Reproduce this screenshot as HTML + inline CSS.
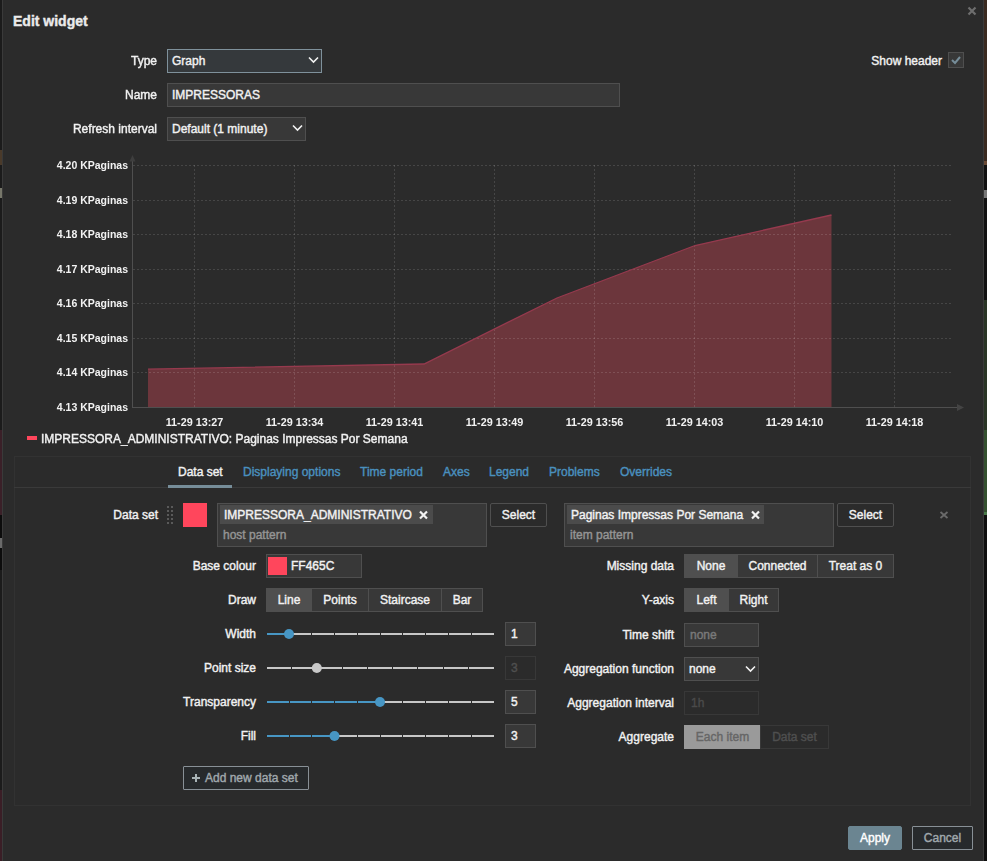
<!DOCTYPE html>
<html><head><meta charset="utf-8">
<style>
*{box-sizing:border-box;margin:0;padding:0}
html,body{width:987px;height:861px;overflow:hidden;background:#161616;font-family:"Liberation Sans",sans-serif;font-size:12px;color:#f2f2f2}
body{-webkit-text-stroke:0.4px currentColor}
.a{position:absolute}
.dlg{position:absolute;left:2px;top:-10px;width:982px;height:880px;background:#2b2b2b;border:1px solid #3a3a3a}
.t{position:absolute;white-space:nowrap;line-height:14px;height:14px}
.lbl{position:absolute;white-space:nowrap;text-align:right;line-height:24px;height:24px}
.inp{position:absolute;height:24px;background:#383838;border:1px solid #4f4f4f;line-height:22px;padding-left:4px;white-space:nowrap}
.btn{position:absolute;height:24px;background:#2b2b2b;border:1px solid #4f4f4f;border-radius:2px;line-height:22px;text-align:center;white-space:nowrap}
.seg{position:absolute;height:24px;background:#383838;border:1px solid #4f4f4f;line-height:22px;text-align:center;white-space:nowrap}
.seg.on{background:#4f4f4f}
.chev{position:absolute;width:7px;height:7px;border-right:1.3px solid #f2f2f2;border-bottom:1.3px solid #f2f2f2;transform:rotate(45deg)}
.tab{position:absolute;top:455px;line-height:14px;color:#4a90bf;white-space:nowrap}
</style></head><body>
<!-- background strips -->
<div class="a" style="left:0;top:0;width:2px;height:861px;background:#1b1b1b"></div>
<div class="a" style="left:0;top:150px;width:2px;height:15px;background:#4a3a2a"></div>
<div class="a" style="left:0;top:188px;width:2px;height:10px;background:#77776a"></div>
<div class="a" style="left:0;top:430px;width:2px;height:85px;background:#3a2028"></div>
<div class="a" style="left:0;top:515px;width:2px;height:55px;background:#0c0c0c"></div>
<div class="a" style="left:0;top:538px;width:2px;height:10px;background:#6a6a6a"></div>
<div class="a" style="left:0;top:790px;width:2px;height:71px;background:#3a1e26"></div>
<div class="a" style="left:984px;top:0;width:3px;height:161px;background:#3a2a20"></div>
<div class="a" style="left:984px;top:161px;width:3px;height:4px;background:#6a4a35"></div>
<div class="a" style="left:984px;top:165px;width:3px;height:135px;background:#111"></div>
<div class="a" style="left:984px;top:190px;width:3px;height:8px;background:#777"></div>
<div class="a" style="left:984px;top:300px;width:3px;height:130px;background:#2a3526"></div>
<div class="a" style="left:984px;top:430px;width:3px;height:82px;background:#34502f"></div>
<div class="a" style="left:984px;top:512px;width:3px;height:3px;background:#4a7a4a"></div>
<div class="a" style="left:984px;top:515px;width:3px;height:346px;background:#0f0f0f"></div>
<div class="dlg"></div>

<!-- header -->
<div class="t" style="left:13px;top:13px;font-size:14px;font-weight:bold;line-height:16px;height:16px;color:#ebebeb">Edit widget</div>
<svg class="a" style="left:966px;top:5px" width="12" height="12" viewBox="0 0 12 12"><path d="M2.5 2.5L9.5 9.5M9.5 2.5L2.5 9.5" stroke="#6e6e6e" stroke-width="2.2"/></svg>

<!-- top form -->
<div class="lbl" style="left:0;width:157px;top:49px">Type</div>
<div class="inp" style="left:167px;top:49px;width:155px;border-color:#7f919b;background:#35393c">Graph</div>
<svg class="a" style="left:308px;top:56px" width="11" height="8" viewBox="0 0 11 8"><path d="M1 1.5L5.5 6L10 1.5" stroke="#f2f2f2" stroke-width="1.6" fill="none"/></svg>
<div class="lbl" style="left:0;width:157px;top:83px">Name</div>
<div class="inp" style="left:167px;top:83px;width:453px">IMPRESSORAS</div>
<div class="lbl" style="left:0;width:157px;top:117px">Refresh interval</div>
<div class="inp" style="left:167px;top:117px;width:139px">Default (1 minute)</div>
<svg class="a" style="left:292px;top:124px" width="11" height="8" viewBox="0 0 11 8"><path d="M1 1.5L5.5 6L10 1.5" stroke="#f2f2f2" stroke-width="1.6" fill="none"/></svg>

<div class="lbl" style="left:800px;width:142px;top:49px">Show header</div>
<div class="a" style="left:948px;top:52px;width:16px;height:16px;background:#383838;border:1px solid #4f4f4f"></div>
<svg class="a" style="left:948px;top:52px" width="16" height="16" viewBox="0 0 16 16"><path d="M4 8L7 11L12 5" fill="none" stroke="#768d99" stroke-width="2"/></svg>

<!-- graph -->
<svg class="a" style="left:0;top:140px;font-family:'Liberation Sans',sans-serif;font-size:10.5px;font-weight:bold" width="987" height="310" viewBox="0 140 987 310" fill="#f2f2f2">
<polygon points="148,369.2 424,364 557,298 695,245.5 831.5,215 831.5,407 148,407" fill="#6c363c" stroke="none"/>
<line x1="133" y1="165.5" x2="952" y2="165.5" stroke="#fff" stroke-dasharray="2,2" stroke-opacity="0.13"/>
<line x1="133" y1="200.5" x2="952" y2="200.5" stroke="#fff" stroke-dasharray="2,2" stroke-opacity="0.13"/>
<line x1="133" y1="234.5" x2="952" y2="234.5" stroke="#fff" stroke-dasharray="2,2" stroke-opacity="0.13"/>
<line x1="133" y1="269.5" x2="952" y2="269.5" stroke="#fff" stroke-dasharray="2,2" stroke-opacity="0.13"/>
<line x1="133" y1="303.5" x2="952" y2="303.5" stroke="#fff" stroke-dasharray="2,2" stroke-opacity="0.13"/>
<line x1="133" y1="338.5" x2="952" y2="338.5" stroke="#fff" stroke-dasharray="2,2" stroke-opacity="0.13"/>
<line x1="133" y1="372.5" x2="952" y2="372.5" stroke="#fff" stroke-dasharray="2,2" stroke-opacity="0.13"/>
<line x1="194.5" y1="165" x2="194.5" y2="407" stroke="#fff" stroke-dasharray="2,2" stroke-opacity="0.13"/>
<line x1="294.5" y1="165" x2="294.5" y2="407" stroke="#fff" stroke-dasharray="2,2" stroke-opacity="0.13"/>
<line x1="394.5" y1="165" x2="394.5" y2="407" stroke="#fff" stroke-dasharray="2,2" stroke-opacity="0.13"/>
<line x1="494.5" y1="165" x2="494.5" y2="407" stroke="#fff" stroke-dasharray="2,2" stroke-opacity="0.13"/>
<line x1="594.5" y1="165" x2="594.5" y2="407" stroke="#fff" stroke-dasharray="2,2" stroke-opacity="0.13"/>
<line x1="694.5" y1="165" x2="694.5" y2="407" stroke="#fff" stroke-dasharray="2,2" stroke-opacity="0.13"/>
<line x1="794.5" y1="165" x2="794.5" y2="407" stroke="#fff" stroke-dasharray="2,2" stroke-opacity="0.13"/>
<line x1="894.5" y1="165" x2="894.5" y2="407" stroke="#fff" stroke-dasharray="2,2" stroke-opacity="0.13"/>
<polyline points="148,369.2 424,364 557,298 695,245.5 831.5,215" fill="none" stroke="#963a4e" stroke-width="1.3"/>
<line x1="132.5" y1="159" x2="132.5" y2="407.5" stroke="#4f4f4f"/>
<line x1="132" y1="407.5" x2="958" y2="407.5" stroke="#4f4f4f"/>
<polygon points="129.5,161.5 132.5,155 135.5,161.5" fill="#3e3e3e"/>
<polygon points="957,404 964,407.5 957,411" fill="#444"/>
<text x="128" y="169" text-anchor="end">4.20 KPaginas</text>
<text x="128" y="204" text-anchor="end">4.19 KPaginas</text>
<text x="128" y="238" text-anchor="end">4.18 KPaginas</text>
<text x="128" y="273" text-anchor="end">4.17 KPaginas</text>
<text x="128" y="307" text-anchor="end">4.16 KPaginas</text>
<text x="128" y="342" text-anchor="end">4.15 KPaginas</text>
<text x="128" y="376" text-anchor="end">4.14 KPaginas</text>
<text x="128" y="411" text-anchor="end">4.13 KPaginas</text>
<text x="194.5" y="426" text-anchor="middle" font-size="10.8">11-29 13:27</text>
<text x="294.5" y="426" text-anchor="middle" font-size="10.8">11-29 13:34</text>
<text x="394.5" y="426" text-anchor="middle" font-size="10.8">11-29 13:41</text>
<text x="494.5" y="426" text-anchor="middle" font-size="10.8">11-29 13:49</text>
<text x="594.5" y="426" text-anchor="middle" font-size="10.8">11-29 13:56</text>
<text x="694.5" y="426" text-anchor="middle" font-size="10.8">11-29 14:03</text>
<text x="794.5" y="426" text-anchor="middle" font-size="10.8">11-29 14:10</text>
<text x="894.5" y="426" text-anchor="middle" font-size="10.8">11-29 14:18</text>
</svg>
<div class="a" style="left:27px;top:436px;width:10px;height:4px;background:#ff465c"></div>
<div class="t" style="left:41px;top:432px">IMPRESSORA_ADMINISTRATIVO: Paginas Impressas Por Semana</div>

<!-- tabs container -->
<div class="a" style="left:14px;top:456px;width:957px;height:350px;border:1px solid #323232"></div>
<div class="a" style="left:14px;top:487px;width:957px;height:1px;background:#3a3a3a"></div>
<div class="tab" style="left:178px;top:465px;color:#f2f2f2">Data set</div>
<div class="a" style="left:168px;top:485px;width:64px;height:3px;background:#768d99"></div>
<div class="tab" style="left:243px;top:465px">Displaying options</div>
<div class="tab" style="left:360px;top:465px">Time period</div>
<div class="tab" style="left:443px;top:465px">Axes</div>
<div class="tab" style="left:489px;top:465px">Legend</div>
<div class="tab" style="left:549px;top:465px">Problems</div>
<div class="tab" style="left:620px;top:465px">Overrides</div>


<!-- data set row -->
<div class="lbl" style="left:60px;width:98px;top:503px">Data set</div>
<svg class="a" style="left:166px;top:505px" width="8" height="20" viewBox="0 0 8 20" fill="#5a5a5a"><rect x="1" y="1" width="2" height="2"/><rect x="5" y="1" width="2" height="2"/><rect x="1" y="5" width="2" height="2"/><rect x="5" y="5" width="2" height="2"/><rect x="1" y="9" width="2" height="2"/><rect x="5" y="9" width="2" height="2"/><rect x="1" y="13" width="2" height="2"/><rect x="5" y="13" width="2" height="2"/><rect x="1" y="17" width="2" height="2"/><rect x="5" y="17" width="2" height="2"/></svg>
<div class="a" style="left:183px;top:503px;width:24px;height:24px;background:#ff465c"></div>

<div class="a" style="left:217px;top:503px;width:270px;height:44px;background:#383838;border:1px solid #4f4f4f"></div>
<div class="a" style="left:220px;top:505px;width:213px;height:19px;background:#4b4b4b"></div>
<div class="t" style="left:224px;top:508px">IMPRESSORA_ADMINISTRATIVO</div>
<svg class="a" style="left:418px;top:510px" width="11" height="10" viewBox="0 0 11 10"><path d="M2 1.5L9 8.5M9 1.5L2 8.5" stroke="#f2f2f2" stroke-width="2.2"/></svg>
<div class="t" style="left:223px;top:528px;color:#959595">host pattern</div>
<div class="btn" style="left:490px;top:503px;width:57px">Select</div>

<div class="a" style="left:564px;top:503px;width:270px;height:44px;background:#383838;border:1px solid #4f4f4f"></div>
<div class="a" style="left:567px;top:505px;width:197px;height:19px;background:#4b4b4b"></div>
<div class="t" style="left:571px;top:508px">Paginas Impressas Por Semana</div>
<svg class="a" style="left:750px;top:510px" width="11" height="10" viewBox="0 0 11 10"><path d="M2 1.5L9 8.5M9 1.5L2 8.5" stroke="#f2f2f2" stroke-width="2.2"/></svg>
<div class="t" style="left:570px;top:528px;color:#959595">item pattern</div>
<div class="btn" style="left:837px;top:503px;width:57px">Select</div>
<svg class="a" style="left:938px;top:510px" width="12" height="10" viewBox="0 0 12 10"><path d="M2.5 2L9.5 8M9.5 2L2.5 8" stroke="#6a6a6a" stroke-width="1.8"/></svg>

<!-- left column -->
<div class="lbl" style="left:160px;width:96px;top:554px">Base colour</div>
<div class="inp" style="left:266px;top:554px;width:96px;padding-left:24px">FF465C</div>
<div class="a" style="left:268px;top:557px;width:19px;height:18px;background:#ff465c"></div>

<div class="lbl" style="left:160px;width:96px;top:588px">Draw</div>
<div class="seg on" style="left:266px;top:588px;width:46px">Line</div>
<div class="seg" style="left:311px;top:588px;width:58px">Points</div>
<div class="seg" style="left:368px;top:588px;width:74px">Staircase</div>
<div class="seg" style="left:441px;top:588px;width:42px">Bar</div>

<div class="lbl" style="left:160px;width:96px;top:622px">Width</div>
<div class="lbl" style="left:160px;width:96px;top:656px">Point size</div>
<div class="lbl" style="left:160px;width:96px;top:690px">Transparency</div>
<div class="lbl" style="left:160px;width:96px;top:724px">Fill</div>
<div class="inp" style="left:505px;top:622px;width:31px;padding-left:5px">1</div>
<div class="inp" style="left:505px;top:656px;width:31px;padding-left:5px;background:#2b2b2b;border-color:#383838;color:#4f4f4f">3</div>
<div class="inp" style="left:505px;top:690px;width:31px;padding-left:5px">5</div>
<div class="inp" style="left:505px;top:724px;width:31px;padding-left:5px">3</div>
<svg class="a" style="left:260px;top:622px" width="240" height="24" viewBox="260 622 240 24"><rect x="267" y="633" width="227" height="2" fill="#c8c8c8"/><rect x="267" y="633" width="22.00" height="2" fill="#4796c4"/><rect x="289" y="633" width="1" height="2" fill="#2b2b2b"/><rect x="311" y="633" width="1" height="2" fill="#2b2b2b"/><rect x="334" y="633" width="1" height="2" fill="#2b2b2b"/><rect x="357" y="633" width="1" height="2" fill="#2b2b2b"/><rect x="380" y="633" width="1" height="2" fill="#2b2b2b"/><rect x="402" y="633" width="1" height="2" fill="#2b2b2b"/><rect x="425" y="633" width="1" height="2" fill="#2b2b2b"/><rect x="448" y="633" width="1" height="2" fill="#2b2b2b"/><rect x="471" y="633" width="1" height="2" fill="#2b2b2b"/><circle cx="289.00" cy="634" r="5" fill="#4796c4"/></svg>
<svg class="a" style="left:260px;top:656px" width="240" height="24" viewBox="260 656 240 24"><rect x="267" y="667" width="227" height="2" fill="#c8c8c8"/><rect x="291" y="667" width="1" height="2" fill="#2b2b2b"/><rect x="316" y="667" width="1" height="2" fill="#2b2b2b"/><rect x="342" y="667" width="1" height="2" fill="#2b2b2b"/><rect x="367" y="667" width="1" height="2" fill="#2b2b2b"/><rect x="392" y="667" width="1" height="2" fill="#2b2b2b"/><rect x="417" y="667" width="1" height="2" fill="#2b2b2b"/><rect x="443" y="667" width="1" height="2" fill="#2b2b2b"/><rect x="468" y="667" width="1" height="2" fill="#2b2b2b"/><circle cx="316.81" cy="668" r="5" fill="#c8c8c8"/></svg>
<svg class="a" style="left:260px;top:690px" width="240" height="24" viewBox="260 690 240 24"><rect x="267" y="701" width="227" height="2" fill="#c8c8c8"/><rect x="267" y="701" width="113.00" height="2" fill="#4796c4"/><rect x="289" y="701" width="1" height="2" fill="#2b2b2b"/><rect x="311" y="701" width="1" height="2" fill="#2b2b2b"/><rect x="334" y="701" width="1" height="2" fill="#2b2b2b"/><rect x="357" y="701" width="1" height="2" fill="#2b2b2b"/><rect x="380" y="701" width="1" height="2" fill="#2b2b2b"/><rect x="402" y="701" width="1" height="2" fill="#2b2b2b"/><rect x="425" y="701" width="1" height="2" fill="#2b2b2b"/><rect x="448" y="701" width="1" height="2" fill="#2b2b2b"/><rect x="471" y="701" width="1" height="2" fill="#2b2b2b"/><circle cx="380.00" cy="702" r="5" fill="#4796c4"/></svg>
<svg class="a" style="left:260px;top:724px" width="240" height="24" viewBox="260 724 240 24"><rect x="267" y="735" width="227" height="2" fill="#c8c8c8"/><rect x="267" y="735" width="67.50" height="2" fill="#4796c4"/><rect x="289" y="735" width="1" height="2" fill="#2b2b2b"/><rect x="311" y="735" width="1" height="2" fill="#2b2b2b"/><rect x="334" y="735" width="1" height="2" fill="#2b2b2b"/><rect x="357" y="735" width="1" height="2" fill="#2b2b2b"/><rect x="380" y="735" width="1" height="2" fill="#2b2b2b"/><rect x="402" y="735" width="1" height="2" fill="#2b2b2b"/><rect x="425" y="735" width="1" height="2" fill="#2b2b2b"/><rect x="448" y="735" width="1" height="2" fill="#2b2b2b"/><rect x="471" y="735" width="1" height="2" fill="#2b2b2b"/><circle cx="334.50" cy="736" r="5" fill="#4796c4"/></svg>

<!-- right column -->
<div class="lbl" style="left:560px;width:114px;top:554px">Missing data</div>
<div class="seg on" style="left:684px;top:554px;width:54px">None</div>
<div class="seg" style="left:737px;top:554px;width:81px">Connected</div>
<div class="seg" style="left:817px;top:554px;width:77px">Treat as 0</div>

<div class="lbl" style="left:560px;width:114px;top:588px">Y-axis</div>
<div class="seg on" style="left:684px;top:588px;width:45px">Left</div>
<div class="seg" style="left:728px;top:588px;width:51px">Right</div>

<div class="lbl" style="left:560px;width:114px;top:623px">Time shift</div>
<div class="inp" style="left:684px;top:623px;width:75px;padding-left:5px;color:#7a7a7a">none</div>
<div class="lbl" style="left:540px;width:134px;top:657px">Aggregation function</div>
<div class="inp" style="left:684px;top:657px;width:75px">none</div>
<svg class="a" style="left:745px;top:665px" width="11" height="8" viewBox="0 0 11 8"><path d="M1 1.5L5.5 6L10 1.5" stroke="#f2f2f2" stroke-width="1.6" fill="none"/></svg>
<div class="lbl" style="left:540px;width:134px;top:691px">Aggregation interval</div>
<div class="inp" style="left:684px;top:691px;width:75px;padding-left:6px;background:#2b2b2b;border-color:#383838;color:#4a4a4a">1h</div>
<div class="lbl" style="left:560px;width:114px;top:725px">Aggregate</div>
<div class="seg" style="left:684px;top:725px;width:77px;background:#9a9a9a;border-color:#9a9a9a;color:#666">Each item</div>
<div class="seg" style="left:760px;top:725px;width:69px;background:#2b2b2b;border-color:#383838;color:#4f4f4f">Data set</div>

<div class="btn" style="left:183px;top:766px;width:126px;border-color:#889096;color:#a0a8ac;background:#272a2c;border-radius:1px;text-align:left;padding-left:21px">Add new data set</div>
<svg class="a" style="left:191px;top:773px" width="10" height="10" viewBox="0 0 10 10"><path d="M5 1V9M1 5H9" stroke="#a8b3b6" stroke-width="2"/></svg>

<!-- footer -->
<div class="btn" style="left:848px;top:826px;width:54px;background:#6b8591;border-color:#6b8591;color:#fff">Apply</div>
<div class="btn" style="left:912px;top:826px;width:61px;background:#272a2c;border-color:#889096;color:#a0a8ac;border-radius:1px">Cancel</div>

</body></html>
